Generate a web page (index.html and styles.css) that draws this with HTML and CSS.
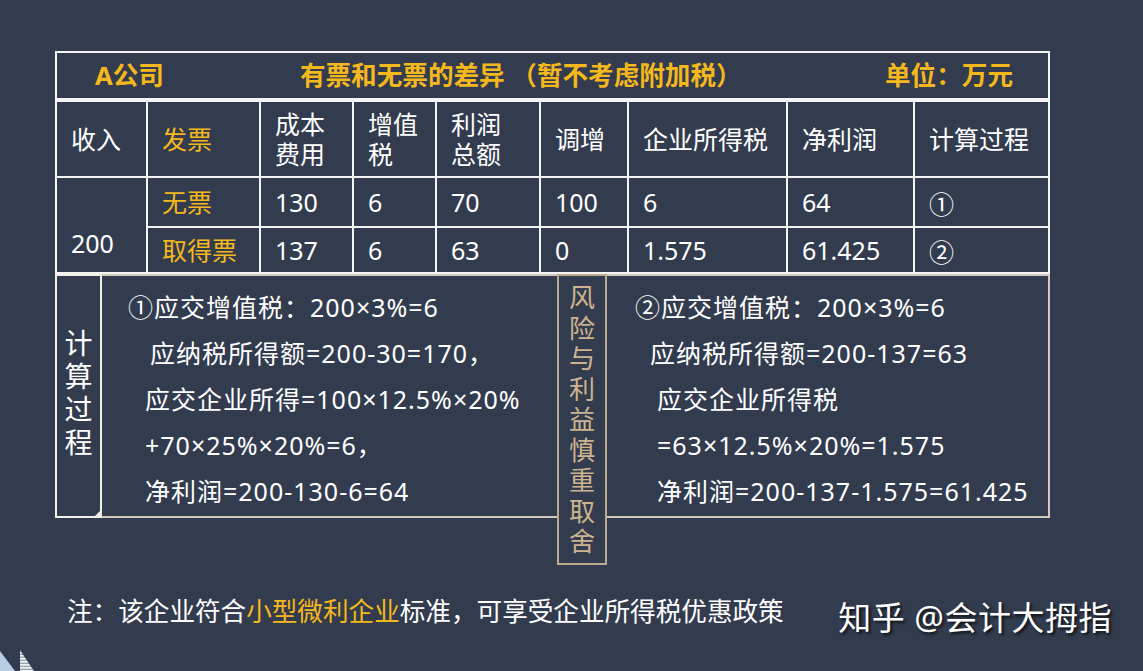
FILE: index.html
```html
<!DOCTYPE html>
<html lang="zh-CN">
<head>
<meta charset="utf-8">
<title>有票和无票的差异</title>
<link rel="stylesheet" href="styles.css">
</head>
<body>
<div class="page">
  <div class="grid">
    <div class="title"><span class="t1">A公司</span><span class="t2">有票和无票的差异 （暂不考虑附加税）</span><span class="t3">单位：万元</span></div>
    <div class="c">收入</div>
    <div class="c y">发票</div>
    <div class="c">成本<br>费用</div>
    <div class="c">增值<br>税</div>
    <div class="c">利润<br>总额</div>
    <div class="c">调增</div>
    <div class="c">企业所得税</div>
    <div class="c">净利润</div>
    <div class="c">计算过程</div>

    <div class="c rev">200</div>
    <div class="c y">无票</div>
    <div class="c">130</div>
    <div class="c">6</div>
    <div class="c">70</div>
    <div class="c">100</div>
    <div class="c">6</div>
    <div class="c">64</div>
    <div class="c circ">①</div>

    <div class="c y">取得票</div>
    <div class="c">137</div>
    <div class="c">6</div>
    <div class="c">63</div>
    <div class="c">0</div>
    <div class="c">1.575</div>
    <div class="c">61.425</div>
    <div class="c circ">②</div>
  </div>

  <div class="lower">
    <div class="label"><span>计算过程</span></div>
    <div class="main">
      <div class="col left">
        <div class="ln l1">①应交增值税：200×3%=6</div>
        <div class="ln l2">应纳税所得额=200-30=170，</div>
        <div class="ln l3">应交企业所得=100×12.5%×20%</div>
        <div class="ln l3">+70×25%×20%=6，</div>
        <div class="ln l3">净利润=200-130-6=64</div>
      </div>
      <div class="risk"><span>风险与利益慎重取舍</span></div>
      <div class="col right">
        <div class="ln r1">②应交增值税：200×3%=6</div>
        <div class="ln r2">应纳税所得额=200-137=63</div>
        <div class="ln r3">应交企业所得税</div>
        <div class="ln r3">=63×12.5%×20%=1.575</div>
        <div class="ln r3">净利润=200-137-1.575=61.425</div>
      </div>
    </div>
  </div>

  <div class="footer">
    <div class="note">注：该企业符合<span class="y">小型微利企业</span>标准，可享受企业所得税优惠政策</div>
    <div class="mark">知乎 @会计大拇指</div>
  </div>

  <svg class="deco" width="40" height="22" viewBox="0 0 40 22">
    <defs>
      <pattern id="stripes" width="4" height="3" patternUnits="userSpaceOnUse">
        <rect width="40" height="3" fill="#9aa3b2"/>
        <rect width="40" height="1.6" fill="#f2f4f7"/>
      </pattern>
    </defs>
    <polygon points="0,2 15,22 0,22" fill="#b9cde3"/>
    <polygon points="20,1 34,22 20,22" fill="url(#stripes)"/>
  </svg>
</div>
</body>
</html>
```

FILE: styles.css
```css
html, body {
  margin: 0;
  padding: 0;
}

body {
  background: #323c4e;
  font-family: "Noto Sans", "Noto Sans CJK SC", "Microsoft YaHei", sans-serif;
  color: #ffffff;
}

.page {
  position: relative;
  width: 1143px;
  height: 671px;
  overflow: hidden;
  box-sizing: border-box;
  padding: 51px 0 0 55px;
}

.y {
  color: #f5b81c;
}

/* ---------- table ---------- */
.grid {
  display: grid;
  width: 995px;
  box-sizing: border-box;
  grid-template-columns: 89px 111px 91px 81px 102px 86px 157px 125px 133px;
  grid-template-rows: 47px 74px 48px 44px;
  gap: 2px;
  padding: 2px;
  background: #f4f4f4;
}

.title {
  grid-column: 1 / -1;
  margin-bottom: 2px;
  background: #323c4e;
  display: flex;
  align-items: center;
  color: #f5b81c;
  font-weight: 700;
  font-size: 25.6px;
  line-height: 30px;
}

.t1 { margin-left: 38px; }
.t2 { margin-left: 136px; }
.t3 { margin-left: auto; margin-right: 35px; }

.c {
  background: #323c4e;
  display: flex;
  align-items: center;
  padding-left: 14px;
  font-size: 25px;
  line-height: 30px;
}

.rev {
  grid-row: span 2;
  align-items: flex-end;
  padding-bottom: 14px;
}

.circ {
  padding-top: 4px;
  box-sizing: border-box;
}

/* ---------- calculation section ---------- */
.lower {
  display: flex;
  align-items: flex-start;
}

.label {
  position: relative;
  width: 47px;
  height: 244px;
  box-sizing: border-box;
  border: 2px solid #f2efe8;
  display: flex;
  align-items: center;
  justify-content: center;
}

.label span {
  width: 28px;
  padding-bottom: 6px;
  font-size: 28px;
  line-height: 33px;
  color: #ffffff;
}

.label::after {
  content: "";
  position: absolute;
  right: -2px;
  bottom: -2px;
  width: 0;
  height: 0;
  border-style: solid;
  border-width: 0 0 9px 9px;
  border-color: transparent transparent #f2efe8 transparent;
}

.main {
  width: 948px;
  height: 244px;
  box-sizing: border-box;
  border: 2px solid #d2cabb;
  border-left: none;
  display: flex;
  align-items: flex-start;
}

.col {
  padding-top: 8px;
  font-size: 25px;
  line-height: 46px;
  letter-spacing: 1px;
  white-space: nowrap;
}

.left {
  width: 455px;
  flex: none;
}

.l1 { margin-left: 26px; }
.l2 { margin-left: 48px; }
.l3 { margin-left: 43px; }

.r1 { margin-left: 28px; }
.r2 { margin-left: 43px; }
.r3 { margin-left: 50px; }

.risk {
  flex: none;
  width: 50px;
  height: 291px;
  margin-top: -2px;
  box-sizing: border-box;
  border: 2px solid #bba98c;
  background: #323c4e;
  display: flex;
  align-items: center;
  justify-content: center;
}

.risk span {
  width: 26px;
  font-size: 26px;
  line-height: 30.5px;
  color: #cdb48e;
}

/* ---------- footer ---------- */
.footer {
  display: flex;
  align-items: flex-start;
  justify-content: space-between;
  width: 1045px;
  margin: 79px 0 0 12px;
}

.note {
  font-size: 25.6px;
  line-height: 30px;
  white-space: nowrap;
}

.mark {
  margin-top: 1px;
  font-size: 33px;
  line-height: 40px;
  letter-spacing: 0.5px;
  white-space: nowrap;
  text-shadow: 2px 2px 3px rgba(0, 0, 0, 0.75);
}

.deco {
  position: absolute;
  left: 0;
  bottom: 0;
}
```
